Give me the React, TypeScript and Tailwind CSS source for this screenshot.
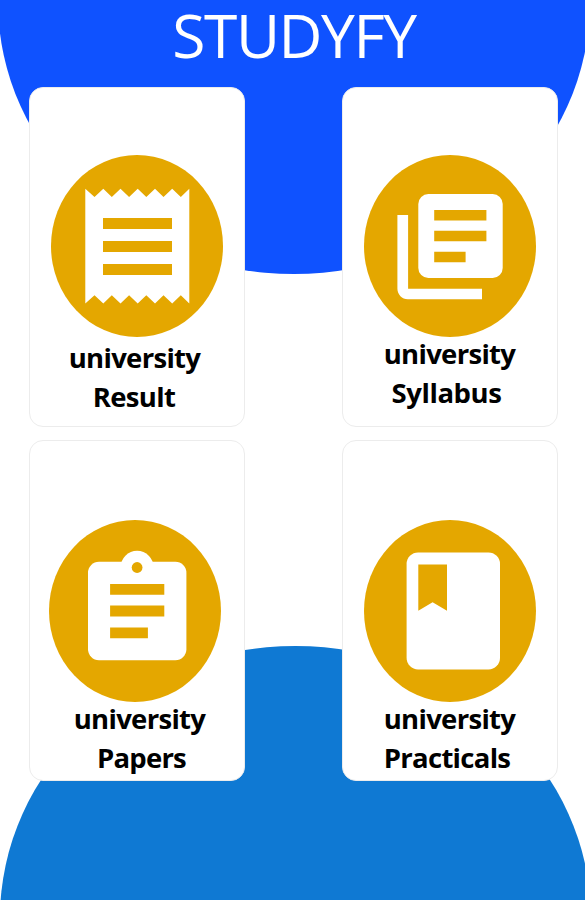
import type { ReactNode } from 'react';

interface Tile {
  id: string;
  title: string;
  icon: ReactNode;
  iconClass: string;
  firstLineClass: string;
  secondLineClass: string;
}

const GOLD = '#e4a700';

const ResultIcon = () => (
  <svg viewBox="51 155 172 182" className="w-[172px] h-[182px] block">
    <ellipse cx="137" cy="246" rx="86" ry="91" fill={GOLD} />
    <path
      fill="#fff"
      d="M85.3 188.7l9.2 8.3 8.8-8.3 8.5 8.3 8.7-8.3 8.6 8.3 8.6-8.3 8.6 8.3 8.7-8.3 8.5 8.3 8.7-8.3 8.6 8.3 8.5-8.3v114.8l-8.5-8.3-8.6 8.3-8.7-8.3-8.5 8.3-8.7-8.3-8.6 8.3-8.6-8.3-8.6 8.3-8.7-8.3-8.5 8.3-8.8-8.3-9.2 8.3z"
    />
    <path fill={GOLD} d="M103 218h69v11h-69zM103 241h69v11h-69zM103 264h69v11h-69z" />
  </svg>
);

const SyllabusIcon = () => (
  <svg viewBox="364 155 172 182" className="w-[172px] h-[182px] block">
    <ellipse cx="450" cy="246" rx="86" ry="91" fill={GOLD} />
    <rect x="418.3" y="194" width="84.4" height="84" rx="10" fill="#fff" />
    <path fill="#fff" d="M397.4 215h10.7v73.8H482v10.5h-74.2c-5.7 0-10.4-4.7-10.4-10.5z" />
    <path
      fill={GOLD}
      d="M434.2 210h52.2v10.4h-52.2zM434.2 230.8h52.2v10.5h-52.2zM434.2 251.8h31.4v10.5h-31.4z"
    />
  </svg>
);

const PapersIcon = () => (
  <svg viewBox="49.3 520 172 182" className="w-[172px] h-[182px] block">
    <ellipse cx="135.3" cy="611" rx="86" ry="91" fill={GOLD} />
    <rect x="88.3" y="561.7" width="98.4" height="98.6" rx="11" fill="#fff" />
    <circle cx="137.4" cy="567.3" r="16.5" fill="#fff" />
    <circle cx="137.4" cy="567.5" r="5.4" fill={GOLD} />
    <path
      fill={GOLD}
      d="M110.4 584h54.2v10.8h-54.2zM110.4 605.6h54.2v10.8h-54.2zM110.4 627.4h37.8v10.8h-37.8z"
    />
  </svg>
);

const PracticalsIcon = () => (
  <svg viewBox="364 520 172 182" className="w-[172px] h-[182px] block">
    <ellipse cx="450" cy="611" rx="86" ry="91" fill={GOLD} />
    <rect x="406.6" y="552.4" width="93.4" height="117" rx="11.5" fill="#fff" />
    <path fill={GOLD} d="M418.3 564.4H447v46.3l-14.4-8.5-14.3 8.5z" />
  </svg>
);

const tiles: Tile[] = [
  {
    id: 'result',
    title: 'Result',
    icon: <ResultIcon />,
    iconClass: 'pt-[67px] pl-[21px]',
    firstLineClass: 'mt-[2px] pr-[5px]',
    secondLineClass: 'pr-[6px] tracking-[-0.7px]',
  },
  {
    id: 'syllabus',
    title: 'Syllabus',
    icon: <SyllabusIcon />,
    iconClass: 'pt-[67px] pl-[21px]',
    firstLineClass: '-mt-[2px] pr-[1px]',
    secondLineClass: 'pr-[7px] tracking-[-0.4px]',
  },
  {
    id: 'papers',
    title: 'Papers',
    icon: <PapersIcon />,
    iconClass: 'pt-[79px] pl-[19.3px]',
    firstLineClass: '-mt-[2px] pl-[5px]',
    secondLineClass: 'pl-[9px] tracking-[-0.8px]',
  },
  {
    id: 'practicals',
    title: 'Practicals',
    icon: <PracticalsIcon />,
    iconClass: 'pt-[79px] pl-[21px]',
    firstLineClass: '-mt-[2px] pr-[1px]',
    secondLineClass: 'pr-[6px] tracking-[-0.7px]',
  },
];

const TileCard = ({ tile }: { tile: Tile }) => (
  <button
    type="button"
    className="flex flex-col justify-start w-full h-full bg-white border border-[#ececec] rounded-[14px] text-black text-[27.5px] leading-[38.5px] font-bold"
  >
    <span className={`block ${tile.iconClass}`}>{tile.icon}</span>
    <span className={`block w-full text-center tracking-[-0.7px] ${tile.firstLineClass}`}>
      university
    </span>
    <span className={`block w-full text-center ${tile.secondLineClass}`}>{tile.title}</span>
  </button>
);

const App = () => {
  return (
    <div className="relative w-[585px] h-[900px] overflow-hidden bg-white font-['Open_Sans',sans-serif]">
      {/* Background discs */}
      <div className="absolute left-[-2px] top-[-270px] w-[592px] h-[544px] rounded-[50%] bg-[#0f52ff]" />
      <div className="absolute left-0 top-[645.5px] w-[591px] h-[544px] rounded-[50%] bg-[#0f79d3]" />

      <div className="relative flex flex-col">
        <header className="h-[87px] pl-[3px] text-center">
          <h1 className="text-white text-[60.5px] leading-[69px] font-normal tracking-[-1.4px]">
            STUDYFY
          </h1>
        </header>

        <main className="grid grid-cols-[216px_216px] grid-rows-[340px_341px] gap-x-[97px] gap-y-[13px] pl-[29px]">
          {tiles.map((tile) => (
            <TileCard key={tile.id} tile={tile} />
          ))}
        </main>
      </div>
    </div>
  );
};

export default App;
